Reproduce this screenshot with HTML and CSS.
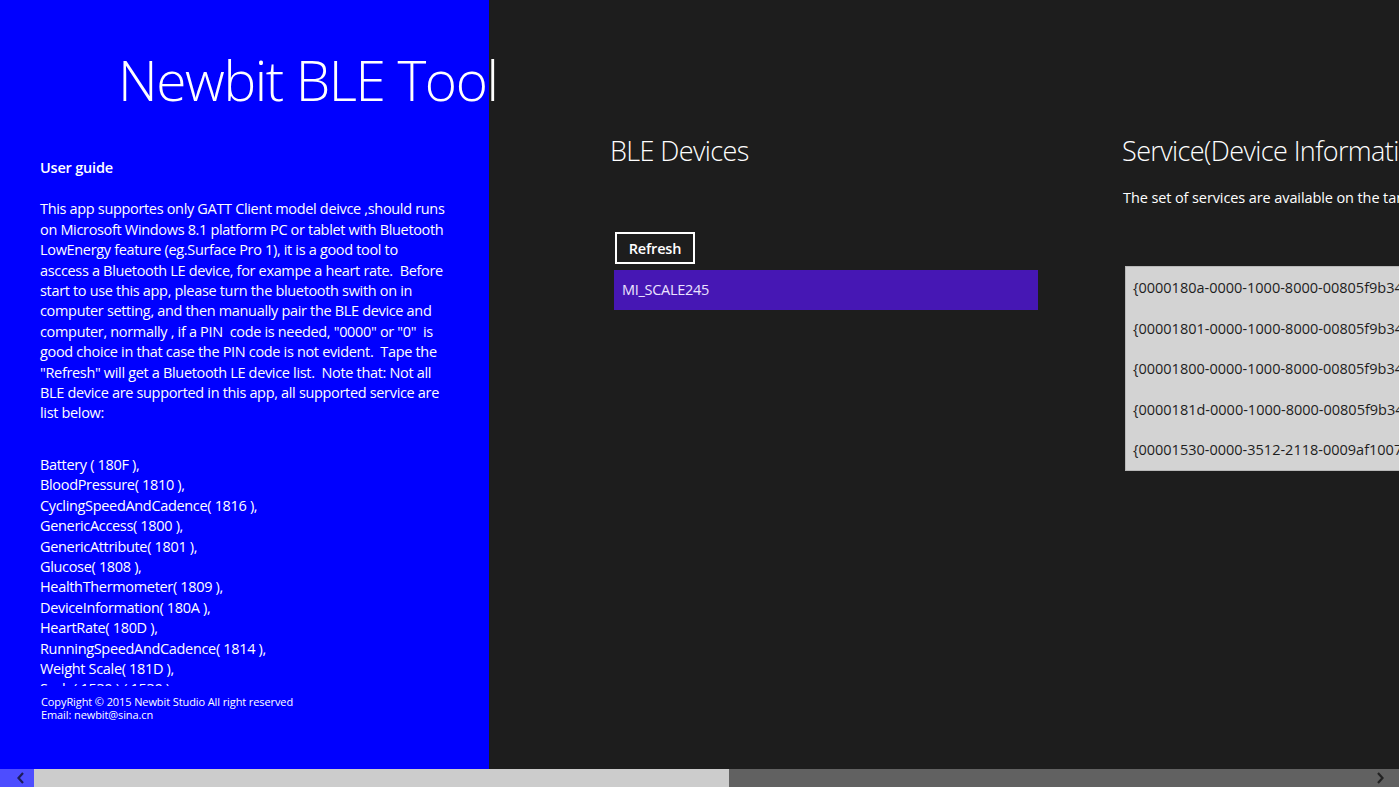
FILE: index.html
```html
<!DOCTYPE html>
<html lang="en">

<head>
    <meta charset="UTF-8">
    <title>Newbit BLE Tool</title>
    <link rel="stylesheet" href="styles.css">
</head>

<body>
    <div id="hub">
        <div id="infoPanel">
            <h1 class="appTitle">Newbit BLE Tool</h1>
            <div class="guide">
                <div class="guideHeader">User guide</div>
                <p class="guideText">This app supportes only GATT Client model deivce ,should runs<br>on Microsoft Windows 8.1 platform PC or tablet with Bluetooth<br>LowEnergy feature (eg.Surface Pro 1), it is a good tool to<br>asccess a Bluetooth LE device, for exampe a heart rate.&nbsp; Before<br>start to use this app, please turn the bluetooth swith on in<br>computer setting, and then manually pair the BLE device and<br>computer, normally , if a PIN&nbsp; code is needed, "0000" or "0"&nbsp; is<br>good choice in that case the PIN code is not evident.&nbsp; Tape the<br>"Refresh" will get a Bluetooth LE device list.&nbsp; Note that: Not all<br>BLE device are supported in this app, all supported service are<br>list below:</p>
                <div class="serviceNames">
                    <div>Battery ( 180F ),</div>
                    <div>BloodPressure( 1810 ),</div>
                    <div>CyclingSpeedAndCadence( 1816 ),</div>
                    <div>GenericAccess( 1800 ),</div>
                    <div>GenericAttribute( 1801 ),</div>
                    <div>Glucose( 1808 ),</div>
                    <div>HealthThermometer( 1809 ),</div>
                    <div>DeviceInformation( 180A ),</div>
                    <div>HeartRate( 180D ),</div>
                    <div>RunningSpeedAndCadence( 1814 ),</div>
                    <div>Weight Scale( 181D ),</div>
                    <div>Scale( 1530 ) ( 1530 )</div>
                </div>
            </div>
            <div class="copyright">
                <div>CopyRight &copy; 2015 Newbit Studio All right reserved</div>
                <div>Email: newbit@sina.cn</div>
            </div>
        </div>

        <div class="section devicesSection">
            <div class="sectionHeader">BLE Devices</div>
            <button class="refreshButton">Refresh</button>
            <div class="deviceList">
                <div class="deviceItem">MI_SCALE245</div>
            </div>
        </div>

        <div class="section servicesSection">
            <div class="sectionHeader">Service(Device Information)</div>
            <div class="sectionNote">The set of services are available on the target device</div>
            <div class="serviceList">
                <div class="serviceItem">{0000180a-0000-1000-8000-00805f9b34fb}</div>
                <div class="serviceItem">{00001801-0000-1000-8000-00805f9b34fb}</div>
                <div class="serviceItem">{00001800-0000-1000-8000-00805f9b34fb}</div>
                <div class="serviceItem">{0000181d-0000-1000-8000-00805f9b34fb}</div>
                <div class="serviceItem">{00001530-0000-3512-2118-0009af100700}</div>
            </div>
        </div>
    </div>

    <!-- 横向滚动条（覆盖在内容上） -->
    <div class="hScrollBar">
        <div class="scrollButton">
            <svg width="10" height="12" viewBox="0 0 10 12"><path d="M7 1 L2.5 6 L7 11" fill="none" stroke="#1c1c5a" stroke-width="2.2"/></svg>
        </div>
        <div class="scrollThumb"></div>
        <div class="scrollTrack"></div>
        <div class="scrollButton right">
            <svg width="10" height="12" viewBox="0 0 10 12"><path d="M3 1 L7.5 6 L3 11" fill="none" stroke="#222" stroke-width="2.2"/></svg>
        </div>
    </div>
</body>

</html>
```

FILE: styles.css
```css
body {
    margin: 0;
    height: 787px;
    overflow: hidden;
    background-color: #1d1d1d;
    color: white;
    font-family: "Open Sans", "Noto Sans", sans-serif;
    position: relative;
}

#hub {
    display: flex;
    height: 787px;
}

#infoPanel {
    flex: 0 0 489px;
    width: 489px;
    min-width: 0;
    background-color: #0000ff;
    display: flex;
    flex-direction: column;
}

.appTitle {
    margin: 52px 0 0 118px;
    font-size: 55px;
    font-weight: 300;
    line-height: 56px;
    letter-spacing: -1.4px;
    white-space: nowrap;
    position: relative;
    z-index: 1;
}

.guide {
    padding-left: 40px;
    margin-top: 50px;
    font-size: 14.5px;
    line-height: 20.4px;
    letter-spacing: -0.33px;
}

.guideHeader {
    font-weight: 600;
    letter-spacing: -0.2px;
}

.guideText {
    margin: 21px 0 0 0;
    white-space: nowrap;
}

.serviceNames {
    margin-top: 31px;
    height: 231px;
    overflow: hidden;
    white-space: nowrap;
}

.copyright {
    padding-left: 41px;
    margin-top: 9px;
    font-size: 11px;
    line-height: 13.5px;
    letter-spacing: -0.1px;
}

.section {
    display: flex;
    flex-direction: column;
    padding-top: 133px;
}

.devicesSection {
    margin-left: 121px;
    width: 430px;
    flex-shrink: 0;
}

.servicesSection {
    margin-left: 82px;
    flex-shrink: 0;
    white-space: nowrap;
}

.sectionHeader {
    font-size: 27px;
    font-weight: 300;
    line-height: 36px;
    letter-spacing: -0.6px;
}

.refreshButton {
    align-self: flex-start;
    margin: 63px 0 0 5px;
    width: 80px;
    height: 32px;
    background: transparent;
    border: 2px solid white;
    color: white;
    font-family: inherit;
    font-size: 14.5px;
    font-weight: 600;
    letter-spacing: -0.2px;
    padding: 0;
}

.deviceList {
    margin-top: 6px;
    margin-left: 4px;
}

.deviceItem {
    width: 416px;
    height: 40px;
    line-height: 40px;
    padding-left: 8px;
    background-color: #4617b4;
    color: #ece4ff;
    font-size: 14.5px;
    letter-spacing: -0.3px;
}

.sectionNote {
    margin-top: 19px;
    margin-left: 1px;
    font-size: 14.5px;
    letter-spacing: -0.1px;
}

.serviceList {
    margin-top: 59px;
    margin-left: 3px;
    background-color: #d3d3d3;
    border: 1px solid #b8b8b8;
    border-right: none;
    padding: 0 0 0 7px;
}

.serviceItem {
    height: 40.6px;
    line-height: 42px;
    color: #1e1e1e;
    font-size: 14.5px;
}

.hScrollBar {
    position: absolute;
    left: 0;
    right: 0;
    bottom: 0;
    height: 18px;
    display: flex;
    background-color: rgba(255, 255, 255, 0.3);
}

.scrollButton {
    width: 34px;
    display: flex;
    align-items: center;
    justify-content: flex-end;
    padding-right: 8px;
    box-sizing: border-box;
}

.scrollButton.right {
    width: 26px;
    justify-content: flex-start;
    padding: 0 0 0 2px;
}

.scrollThumb {
    width: 695px;
    background-color: #cccccc;
}

.scrollTrack {
    flex: 1;
}
```
